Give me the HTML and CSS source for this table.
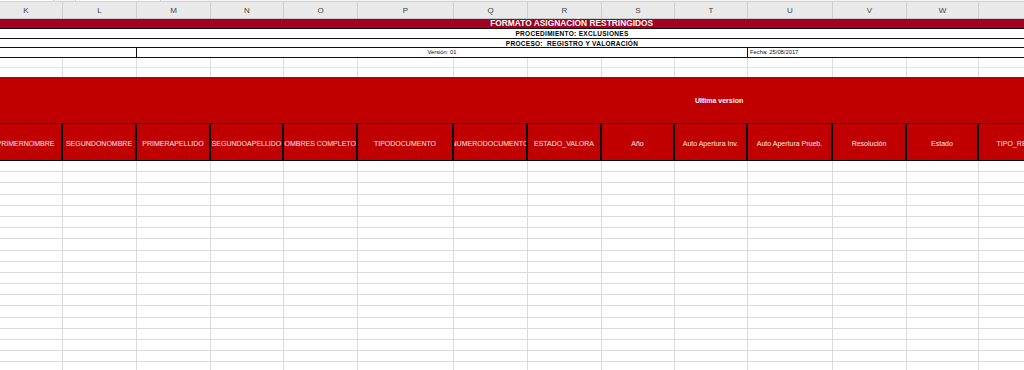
FILE: index.html
```html
<!DOCTYPE html>
<html lang="es">
<head>
<meta charset="utf-8">
<title>Formato Asignación Restringidos</title>
<link rel="stylesheet" href="styles.css">
</head>
<body>
<div class="sheet">
  <div class="tabs"><span class="tab tab-a"></span><span class="tab tab-b"></span></div>
  <div class="grid colhead">
    <div>K</div><div>L</div><div>M</div><div>N</div><div>O</div><div>P</div><div>Q</div><div>R</div><div>S</div><div>T</div><div>U</div><div>V</div><div>W</div><div></div>
  </div>
  <div class="band title"><span class="title-text">FORMATO ASIGNACIÓN RESTRINGIDOS</span></div>
  <div class="band sub r1">PROCEDIMIENTO: EXCLUSIONES</div>
  <div class="band sub r2">PROCESO:&nbsp; REGISTRO Y VALORACIÓN</div>
  <div class="version">
    <div class="v-left"></div>
    <div class="v-mid">Versión: 01</div>
    <div class="v-right">Fecha: 25/08/2017</div>
  </div>
  <div class="grid blank">
    <div></div><div></div><div></div><div></div><div></div><div></div><div></div><div></div><div></div><div></div><div></div><div></div><div></div><div></div>
  </div>
  <div class="grid blank last">
    <div></div><div></div><div></div><div></div><div></div><div></div><div></div><div></div><div></div><div></div><div></div><div></div><div></div><div></div>
  </div>
  <div class="grid redband">
    <div class="ultima">Ultima version</div>
  </div>
  <div class="grid header">
    <div><span>PRIMERNOMBRE</span></div>
    <div><span>SEGUNDONOMBRE</span></div>
    <div><span>PRIMERAPELLIDO</span></div>
    <div><span>SEGUNDOAPELLIDO</span></div>
    <div><span>NOMBRES COMPLETOS</span></div>
    <div><span>TIPODOCUMENTO</span></div>
    <div><span>NUMERODOCUMENTO</span></div>
    <div><span>ESTADO_VALORA</span></div>
    <div><span>Año</span></div>
    <div><span>Auto Apertura Inv.</span></div>
    <div><span>Auto Apertura Prueb.</span></div>
    <div><span>Resolución</span></div>
    <div><span>Estado</span></div>
    <div><span>TIPO_REGISTRO</span></div>
  </div>
  <div class="data" id="data"></div>
</div>
<script>
  var data = document.getElementById('data');
  for (var r = 0; r < 19; r++) {
    var row = document.createElement('div');
    row.className = 'grid drow';
    for (var c = 0; c < 14; c++) row.appendChild(document.createElement('div'));
    data.appendChild(row);
  }
</script>
</body>
</html>
```
FILE: styles.css
```css
html, body {
  margin: 0;
  padding: 0;
  background: #ffffff;
  overflow: hidden;
}
body {
  width: 1024px;
  height: 370px;
  font-family: "Liberation Sans", Arial, sans-serif;
}
.sheet {
  width: 1024px;
  height: 370px;
  overflow: hidden;
}
.tabs {
  height: 1px;
  background: #f4f4f4;
  border-bottom: 1px solid #d2d2d2;
  display: flex;
}
.tab-a { width: 53px; background: #fff; border-right: 1px solid #d2d2d2; }
.tab-b { width: 84px; margin-left: 21px; background: #fff; border-left: 1px solid #d2d2d2; border-right: 1px solid #d2d2d2; }

.grid {
  display: grid;
  grid-template-columns: 73px 74px 74px 73px 74px 96px 74px 74px 73px 73px 85px 74px 72px 94px;
  margin-left: -10px;
  width: 1083px;
}

.colhead {
  height: 16px;
  background: #e9e9e9;
  border-bottom: 1px solid #c9c9c9;
}
.colhead > div {
  border-right: 1px solid #cfcfcf;
  font-size: 8px;
  color: #444;
  display: flex;
  align-items: center;
  justify-content: center;
  padding-top: 1px;
}

.band {
  width: 1024px;
  box-sizing: border-box;
  padding-left: 120px;
  text-align: center;
  white-space: nowrap;
  border-bottom: 1px solid #111;
}
.title {
  height: 10px;
  background: #a30022;
  color: #fff;
  font-weight: bold;
  font-size: 9px;
  line-height: 9px;
}
.title-text {
  display: inline-block;
  transform: scaleX(0.93);
  transform-origin: center;
}
.sub {
  color: #000;
  font-weight: bold;
  font-size: 6.5px;
  letter-spacing: 0.3px;
  display: flex;
  align-items: center;
  justify-content: center;
}
.r1 { height: 10px; }
.r2 { height: 9px; }

.version {
  display: flex;
  height: 9px;
  border-bottom: 1px solid #111;
  font-size: 5.8px;
  color: #111;
  line-height: 9px;
  white-space: nowrap;
}
.v-left { width: 136px; border-right: 1px solid #111; }
.v-mid { width: 610px; border-right: 1px solid #111; text-align: center; }
.v-right { flex: 1; padding-left: 2px; }

.blank {
  height: 9px;
  border-bottom: 1px solid #e4e4e4;
}
.blank.last { border-bottom-color: #3a3a3a; }
.blank > div { border-right: 1px solid #dedede; }

.redband {
  height: 45px;
  background: #c00000;
}
.ultima {
  grid-column: 10;
  padding-left: 20px;
  white-space: nowrap;
  color: #fff;
  font-weight: bold;
  font-size: 7px;
  display: flex;
  align-items: center;
}

.header {
  height: 36px;
  background: #c00000;
  border-top: 1px solid #000;
  border-bottom: 1px solid #000;
}
.header > div {
  border-right: 2px solid #000;
  overflow: hidden;
  display: flex;
  align-items: center;
  justify-content: center;
  white-space: nowrap;
  color: #fbeaea;
  font-size: 7px;
  padding-top: 2px;
}
.header > div > span { flex-shrink: 0; }

.drow {
  height: 10.2px;
  border-bottom: 1px solid #dadada;
}
.drow > div { border-right: 1px solid #dadada; }
```
